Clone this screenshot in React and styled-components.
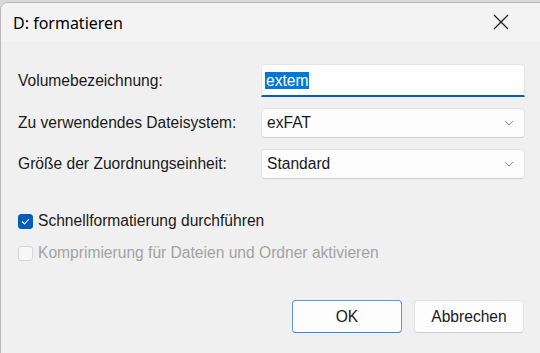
import React from 'react';
import styled, { createGlobalStyle } from 'styled-components';

const GlobalStyle = createGlobalStyle`
  html, body {
    margin: 0;
    padding: 0;
    width: 540px;
    height: 353px;
    overflow: hidden;
    background: #d9d9d9;
  }
  * { box-sizing: border-box; }
`;

const Window = styled.div`
  width: 560px;
  height: 360px;
  margin-top: 2px;
  background: #f0f0f0;
  border: 1px solid #b8b8b8;
  border-top-left-radius: 8px;
  overflow: hidden;
  display: flex;
  flex-direction: column;
  font-family: "Liberation Sans", Arial, sans-serif;
  color: #1a1a1a;
`;

const TitleBar = styled.div`
  height: 38px;
  flex: none;
  display: flex;
  align-items: center;
  justify-content: space-between;
  padding: 0 0 0 12px;
  background: #f3f3f3;
`;

const Title = styled.span`
  font-family: "Noto Sans", "Open Sans", sans-serif;
  font-size: 16px;
  color: #000;
  margin-top: 1px;
`;

const CloseButton = styled.div`
  width: 46px;
  margin-right: 35px;
  height: 38px;
  display: flex;
  align-items: center;
  justify-content: center;
`;

const Body = styled.div`
  flex: 1;
  display: flex;
  flex-direction: column;
  padding: 23px 34px 0 16px;
`;

const Form = styled.div`
  display: grid;
  grid-template-columns: 244px 264px;
  grid-auto-rows: auto;
  row-gap: 11px;
  align-items: center;
`;

const Label = styled.label`
  font-size: 15.6px;
  color: #1a1a1a;
  padding-left: 1px;
`;

const TextField = styled.div`
  height: 33px;
  background: #fff;
  border: 1px solid #e5e5e5;
  border-bottom: 2px solid #005fb8;
  border-radius: 4px 4px 0 0;
  display: flex;
  align-items: center;
  padding: 1px 3px 0 3px;
`;

const Selected = styled.span`
  background: #0078d7;
  color: #fff;
  font-size: 15.6px;
  line-height: 17px;
  padding: 0 1px;
`;

const Select = styled.div`
  height: 30px;
  background: #fdfdfd;
  border: 1px solid #e3e3e3;
  border-bottom-color: #cfcfcf;
  border-radius: 4px;
  display: flex;
  align-items: center;
  justify-content: space-between;
  padding: 0 10px 0 5px;
  font-size: 15.6px;
  color: #1a1a1a;
`;

const Checks = styled.div`
  display: flex;
  flex-direction: column;
  gap: 14px;
  margin-top: 33px;
`;

const CheckRow = styled.div`
  display: flex;
  align-items: center;
  gap: 5px;
  font-size: 15.6px;
  color: ${p => (p.disabled ? '#a3a3a3' : '#1a1a1a')};
`;

const Box = styled.span`
  width: 15px;
  height: 15px;
  border-radius: 3px;
  flex: none;
  display: flex;
  align-items: center;
  justify-content: center;
  background: ${p => (p.checked ? '#005fb8' : '#f7f7f7')};
  border: 1px solid ${p => (p.checked ? '#005fb8' : '#d6d6d6')};
  margin-left: 1px;
`;

const Footer = styled.div`
  display: flex;
  justify-content: flex-end;
  gap: 12px;
  margin-top: 38px;
  padding-right: 1px;
`;

const Button = styled.button`
  width: 110px;
  height: 33px;
  background: #fdfdfd;
  border: 1px solid ${p => (p.primary ? '#5c9bd6' : '#e2e2e2')};
  border-bottom-color: ${p => (p.primary ? '#3f88cf' : '#cdcdcd')};
  border-radius: 4px;
  font-family: "Liberation Sans", Arial, sans-serif;
  font-size: 15.6px;
  color: #1a1a1a;
  padding: 0;
`;

const Chevron = () => (
  <svg width="10" height="6" viewBox="0 0 10 6">
    <path d="M1 1 L5 5 L9 1" fill="none" stroke="#8a8a8a" strokeWidth="1" />
  </svg>
);

const App = () => (
  <>
    <GlobalStyle />
    <Window>
      <TitleBar>
        <Title>D: formatieren</Title>
        <CloseButton>
          <svg width="16" height="16" viewBox="0 0 16 16">
            <path d="M1 1 L15 15 M15 1 L1 15" stroke="#1a1a1a" strokeWidth="1.2" fill="none" />
          </svg>
        </CloseButton>
      </TitleBar>
      <Body>
        <Form>
          <Label>Volumebezeichnung:</Label>
          <TextField>
            <Selected>extem</Selected>
          </TextField>
          <Label>Zu verwendendes Dateisystem:</Label>
          <Select>
            exFAT
            <Chevron />
          </Select>
          <Label>Größe der Zuordnungseinheit:</Label>
          <Select>
            Standard
            <Chevron />
          </Select>
        </Form>
        <Checks>
          <CheckRow>
            <Box checked>
              <svg width="9" height="7" viewBox="0 0 9 7">
                <path d="M1 3.5 L3.5 6 L8 1" fill="none" stroke="#fff" strokeWidth="1.1" />
              </svg>
            </Box>
            Schnellformatierung durchführen
          </CheckRow>
          <CheckRow disabled>
            <Box />
            Komprimierung für Dateien und Ordner aktivieren
          </CheckRow>
        </Checks>
        <Footer>
          <Button primary>OK</Button>
          <Button>Abbrechen</Button>
        </Footer>
      </Body>
    </Window>
  </>
);

export default App;
